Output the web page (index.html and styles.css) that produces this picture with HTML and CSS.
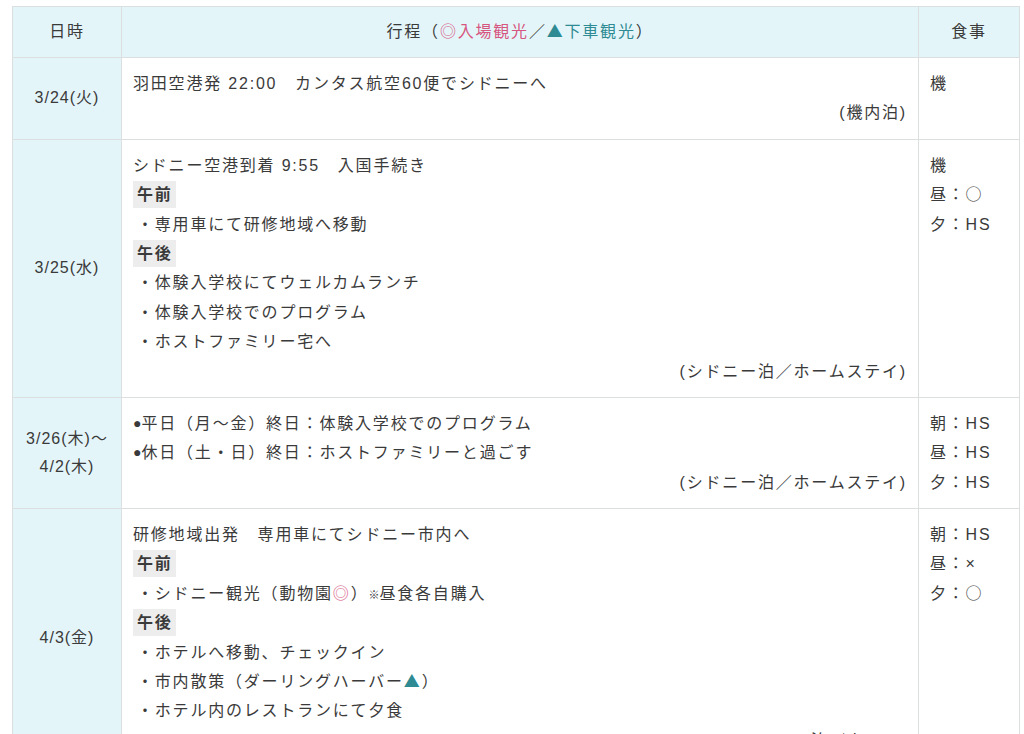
FILE: index.html
```html
<!DOCTYPE html>
<html lang="ja">
<head>
<meta charset="utf-8">
<link rel="stylesheet" href="styles.css">
</head>
<body>
<div class="wrap">
<table class="sched">
  <colgroup>
    <col class="c-date">
    <col class="c-plan">
    <col class="c-meal">
  </colgroup>
  <thead>
    <tr>
      <th>日時</th>
      <th>行程（<span class="pink sym">◎入場観光</span>／<span class="teal sym">▲下車観光</span>）</th>
      <th>食事</th>
    </tr>
  </thead>
  <tbody>
    <tr>
      <td class="date">3/24(火)</td>
      <td class="plan">
        <p>羽田空港発 22:00　カンタス航空60便でシドニーへ</p>
        <p class="stay">(機内泊)</p>
      </td>
      <td class="meal"><p>機</p></td>
    </tr>
    <tr>
      <td class="date">3/25(水)</td>
      <td class="plan">
        <p>シドニー空港到着 9:55　入国手続き</p>
        <p><span class="tag">午前</span></p>
        <p class="item">・専用車にて研修地域へ移動</p>
        <p><span class="tag">午後</span></p>
        <p class="item">・体験入学校にてウェルカムランチ</p>
        <p class="item">・体験入学校でのプログラム</p>
        <p class="item">・ホストファミリー宅へ</p>
        <p class="stay">(シドニー泊／ホームステイ)</p>
      </td>
      <td class="meal"><p>機</p><p>昼：<span class="sym">○</span></p><p>夕：HS</p></td>
    </tr>
    <tr>
      <td class="date">3/26(木)〜<br>4/2(木)</td>
      <td class="plan">
        <p><span class="dot">●</span>平日（月〜金）終日：体験入学校でのプログラム</p>
        <p><span class="dot">●</span>休日（土・日）終日：ホストファミリーと過ごす</p>
        <p class="stay">(シドニー泊／ホームステイ)</p>
      </td>
      <td class="meal"><p>朝：HS</p><p>昼：HS</p><p>夕：HS</p></td>
    </tr>
    <tr>
      <td class="date">4/3(金)</td>
      <td class="plan">
        <p>研修地域出発　専用車にてシドニー市内へ</p>
        <p><span class="tag">午前</span></p>
        <p class="item">・シドニー観光（動物園<span class="pink sym">◎</span>）<span class="note">※</span>昼食各自購入</p>
        <p><span class="tag">午後</span></p>
        <p class="item">・ホテルへ移動、チェックイン</p>
        <p class="item">・市内散策（ダーリングハーバー<span class="teal sym">▲</span>）</p>
        <p class="item">・ホテル内のレストランにて夕食</p>
        <p class="stay">(シドニー泊／ホテル)</p>
      </td>
      <td class="meal"><p>朝：HS</p><p>昼：×</p><p>夕：<span class="sym">○</span></p></td>
    </tr>
  </tbody>
</table>
</div>
</body>
</html>
```

FILE: styles.css
```css
html, body {
  margin: 0;
  padding: 0;
  background: #ffffff;
}
body {
  font-family: "Liberation Sans", "Noto Sans CJK JP", sans-serif;
  font-size: 16px;
  color: #3a3a3a;
}
.wrap {
  padding: 6px 5px 0 12px;
}
.sched {
  width: 1007px;
  border-collapse: collapse;
  table-layout: fixed;
}
.c-date { width: 109px; }
.c-plan { width: 797px; }
.c-meal { width: 101px; }
.sched th,
.sched td {
  border: 1px solid #dcdfe0;
  letter-spacing: 1.8px;
  line-height: 29.4px;
}
.sched th {
  background: #e4f5f9;
  font-weight: normal;
  height: 50px;
  padding: 0 6px;
  text-align: center;
  vertical-align: middle;
}
.sym {
  font-family: "Noto Sans CJK JP", sans-serif;
  line-height: 1;
}
.pink { color: #d7567f; }
.teal { color: #2f8b93; }
.sched td {
  padding: 11px 11px;
  vertical-align: top;
}
.sched td.date {
  background: #e4f5f9;
  text-align: center;
  vertical-align: middle;
  line-height: 28px;
  padding: 11px 2px;
  letter-spacing: 1px;
}
.plan p,
.meal p {
  margin: 0;
  height: 29.4px;
  overflow: visible;
}
.plan .stay {
  text-align: right;
}
.plan .item {
  padding-left: 4px;
}
.tag {
  display: inline-block;
  background: #ededed;
  font-weight: bold;
  padding: 0 3px 0 4px;
  line-height: 27px;
}
.dot {
  font-size: 14px;
  letter-spacing: 0;
  line-height: 1;
  vertical-align: 1px;
}
.note {
  font-size: 11px;
  letter-spacing: 0;
  line-height: 1;
}
```
